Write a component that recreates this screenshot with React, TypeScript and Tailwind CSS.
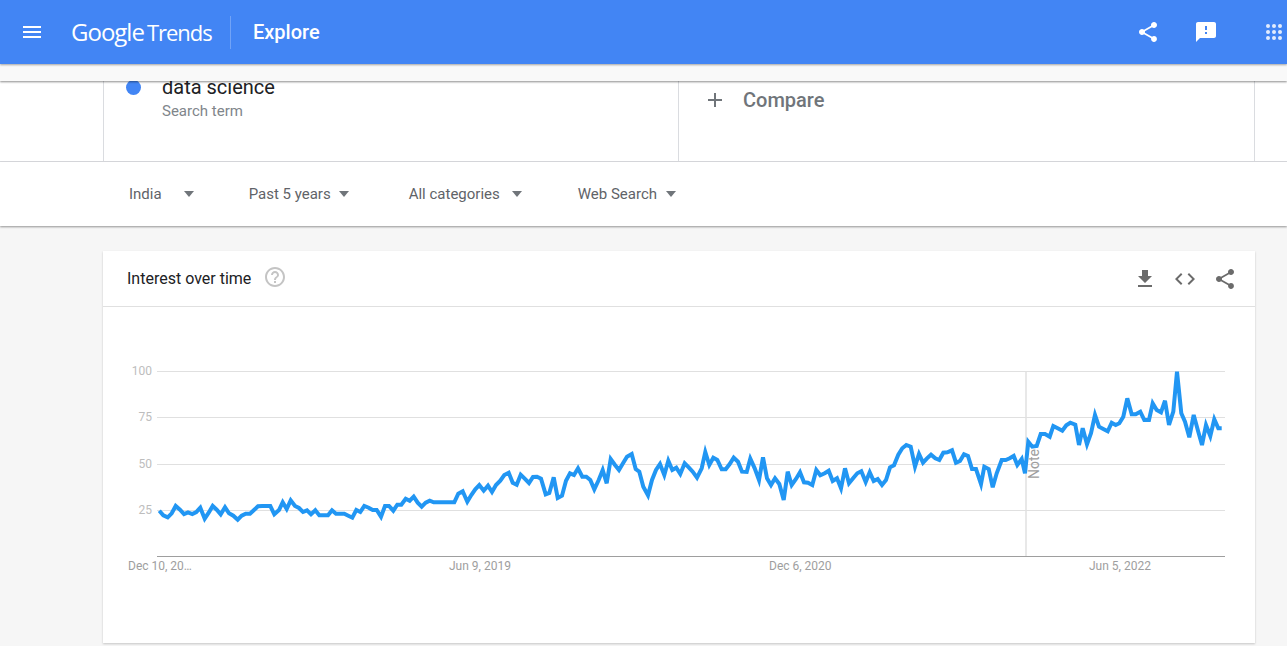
const filters = [
  { label: 'India', gap: 'gap-[22px]', next: 'mr-[55px]' },
  { label: 'Past 5 years', gap: 'gap-[8px]', next: 'mr-[60px]' },
  { label: 'All categories', gap: 'gap-[12px]', next: 'mr-[56px]' },
  { label: 'Web Search', gap: 'gap-[9px]', next: '' },
];

const SHARE = 'M18 16.08c-.76 0-1.44.3-1.96.77L8.91 12.7c.05-.23.09-.46.09-.7s-.04-.47-.09-.7l7.05-4.11c.54.5 1.25.81 2.04.81 1.66 0 3-1.34 3-3s-1.34-3-3-3-3 1.34-3 3c0 .24.04.47.09.7L8.04 9.81C7.5 9.31 6.79 9 6 9c-1.66 0-3 1.34-3 3s1.34 3 3 3c.79 0 1.5-.31 2.04-.81l7.12 4.16c-.05.21-.08.43-.08.65 0 1.61 1.31 2.92 2.92 2.92 1.61 0 2.92-1.31 2.92-2.92s-1.31-2.92-2.92-2.92z';

const Icon = ({ d, className }: { d: string; className: string }) => (
  <svg viewBox="0 0 24 24" fill="currentColor" className={className}>
    <path d={d} />
  </svg>
);

// traced from the chart, 3x scale, one run per x offset
const runs: [number, number[]][] = [
  [100, [178,452,190,466,203,472,215,460,227,438,240,449,252,462,264,457,277,462,289,456,301,443,314,476,326,458,338,438,350,449,362,463,375,442,387,460,400,467,413,479,425,467,437,461,450,461,462,450,474,439,487,438,499,438,511,438,523,463,537,450,548,427,560,447,572,421,585,438,597,444,609,456,621,451,633,463,646,451,658,466,670,466,684,466,696,451,708,461,720,461,733,461,745,467,757,473,769,450,781,456,793,438,806,443,818,450,830,450,843,470,855,438,867,438,880,452,892,434,904,434,917,416,929,422,941,410,953,428]],
  [420, [5,440,17,428,29,422,41,427,53,427,65,427,78,427,90,427,103,427,115,401,128,394,142,425,154,405,166,388,178,375,191,392,204,377,216,396,228,375,241,362,253,345,266,338,278,368,290,374,302,344,314,356,327,369,339,351,351,350,363,356,377,403,388,399,401,352,413,414,426,407,438,362,450,340,462,345,474,325,487,350,499,350,511,360,523,388,536,360,548,330,560,370,572,297,585,315,597,330,609,310,621,290,635,282,647,327,658,335,670,380,684,406,696,360,708,330,720,312,733,345,745,302,757,330,769,323,781,342,794,310,806,322,818,335,831,353,845,325,856,276,868,315,880,293,892,300,905,328,917,328,929,312,941,293,954,305]],
  [740, [6,335,20,336,31,296,44,325,57,360,69,292,81,355,93,375,105,355,118,372,131,420,143,335,155,375,168,357,180,337,192,367,204,368,217,375,229,330,241,346,254,340,266,332,278,363,291,355,303,385,315,325,327,370,340,354,352,340,364,334,377,366,389,337,401,363,413,357,426,375,438,360,450,322,462,316,475,284,487,265,499,255,512,260,525,320,537,282,549,308,561,295,573,284,586,295,598,300,610,278,622,277,636,271,648,308,660,303,672,283,684,288,696,327,708,327,723,372,733,320,746,327,758,382,770,340]],
  [1000, [5,300,17,300,29,295,41,288,52,315,65,297,75,340,85,245,97,260,110,258,122,222,135,222,149,230,160,198,173,205,187,212,199,196,211,188,226,194,237,255,248,205,261,253,273,220,285,165,297,200,310,207,323,214,335,188,347,195,358,190,370,170,382,115,395,163,407,163,421,155,433,180,447,180,458,130,470,150,483,157,495,122,507,195,520,155,531,35,544,160,555,185,568,232,581,165,594,212,606,255,618,195,631,228,643,178,655,205,665,205]],
];

const linePoints = runs
  .flatMap(([left, v]) =>
    v.flatMap((n, i) => (i % 2 === 0 ? [`${(left + n / 3).toFixed(1)},${(360 + v[i + 1] / 3).toFixed(1)}`] : []))
  )
  .join(' ');

const gridLines = [
  { y: 371, label: '100' },
  { y: 417, label: '75' },
  { y: 464, label: '50' },
  { y: 510, label: '25' },
];

const dates = [
  { x: 128, label: 'Dec 10, 20…' },
  { x: 449, label: 'Jun 9, 2019' },
  { x: 769, label: 'Dec 6, 2020' },
  { x: 1089, label: 'Jun 5, 2022' },
];

const App = () => {
  return (
    <div className="h-[646px] overflow-hidden bg-[#f6f6f6] font-['Roboto',sans-serif]">
      {/* Top bar */}
      <header className="relative z-20 flex h-[64px] items-center bg-[#4285f4] text-white shadow-[0_1px_2px_rgba(0,0,0,0.35)]">
        <Icon className="ml-[20px] h-6 w-6" d="M3 18h18v-2H3v2zm0-5h18v-2H3v2zm0-7v2h18V6H3z" />
        <div className="ml-[27px] flex w-[159px] items-baseline gap-[3px] font-['Open_Sans',sans-serif] text-[24px] leading-none tracking-[-1px]">
          <span>Google</span>
          <span className="text-[22px] tracking-[-1px]">Trends</span>
        </div>
        <div className="h-[33px] w-px bg-white/25" />
        <span className="ml-[22px] text-[20px] font-medium">Explore</span>
        <div className="ml-auto flex items-center">
          <Icon className="h-6 w-6" d={SHARE} />
          <Icon className="ml-[34px] h-6 w-6" d="M20 2H4c-1.1 0-1.99.9-1.99 2L2 22l4-4h14c1.1 0 2-.9 2-2V4c0-1.1-.9-2-2-2zm-7 12h-2v-2h2v2zm0-4h-2V6h2v4z" />
          <div className="mr-[5px] ml-[48px] grid grid-cols-3 gap-[2px] opacity-85">
            {Array.from({ length: 9 }).map((_, i) => (
              <span key={i} className="h-1 w-1 rounded-full bg-white" />
            ))}
          </div>
        </div>
      </header>

      {/* Collapsed strip under the bar */}
      <div className="relative z-10 h-[17px] bg-[#f9f9f9] shadow-[0_1px_2px_rgba(0,0,0,0.45)]" />

      {/* Search terms */}
      <section className="flex h-[81px] overflow-hidden border-b border-[#dadce0] bg-white pl-[103px]">
        <div className="flex h-full w-[575px] gap-[20px] border-l border-[#dadce0] pl-[22px]">
          <span className="mt-[-1px] h-[15px] w-[15px] rounded-full bg-[#4285f4]" />
          <div className="mt-[-7px] ml-[1px]">
            <div className="text-[20px] leading-[26px] text-[#202124]">data science</div>
            <div className="mt-[2px] text-[15px] leading-[18px] text-[#80868b]">Search term</div>
          </div>
        </div>
        <div className="flex h-full w-[576px] items-start border-l border-[#dadce0] pt-[7px] pl-[24px] text-[#70757a]">
          <svg viewBox="0 0 24 24" fill="currentColor" className="h-6 w-6"><path d="M19 13h-6v6h-2v-6H5v-2h6V5h2v6h6v2z" /></svg>
          <span className="ml-[16px] text-[20px] leading-6 font-medium">Compare</span>
        </div>
        <div className="h-full border-l border-[#dadce0]" />
      </section>

      {/* Filters */}
      <section className="flex h-[64px] items-center bg-white pl-[129px] text-[15px] text-[#5f6368] shadow-[0_1px_2px_rgba(0,0,0,0.4)]">
        {filters.map((f) => (
          <div key={f.label} className={`flex items-center ${f.gap} ${f.next}`}>
            <span>{f.label}</span>
            <span className="h-0 w-0 border-x-[5.5px] border-t-[6px] border-x-transparent border-t-[#70757a]" />
          </div>
        ))}
      </section>

      {/* Interest over time card */}
      <section className="mt-[25px] ml-[103px] h-[392px] w-[1152px] bg-white shadow-[0_1px_2px_rgba(0,0,0,0.2)]">
        <div className="flex h-[56px] items-center border-b border-[#e0e0e0] pr-[18px] pl-[24px]">
          <span className="text-[16px] text-[#202124]">Interest over time</span>
          <Icon className="ml-[12px] mb-[3px] h-6 w-6 text-[#c4c4c4]" d="M11 18h2v-2h-2v2zm1-16C6.48 2 2 6.48 2 12s4.48 10 10 10 10-4.48 10-10S17.52 2 12 2zm0 18c-4.41 0-8-3.59-8-8s3.59-8 8-8 8 3.59 8 8-3.59 8-8 8zm0-14c-2.21 0-4 1.79-4 4h2c0-1.1.9-2 2-2s2 .9 2 2c0 2-3 1.75-3 5h2c0-2.25 3-2.5 3-5 0-2.21-1.79-4-4-4z" />
          <div className="ml-auto flex items-center gap-4 text-[#6b6b6b]">
            <Icon className="h-6 w-6" d="M19 9h-4V3H9v6H5l7 7 7-7zM5 18v2h14v-2H5z" />
            <Icon className="h-6 w-6" d="M9.4 16.6L4.8 12l4.6-4.6L8 6l-6 6 6 6 1.4-1.4zm5.2 0l4.6-4.6-4.6-4.6L16 6l6 6-6 6-1.4-1.4z" />
            <Icon className="h-6 w-6" d={SHARE} />
          </div>
        </div>
        <svg viewBox="103 307 1152 336" className="block h-[336px] w-[1152px]" fontSize="12">
          {gridLines.map((g) => (
            <g key={g.y}>
              <line x1="157" x2="1225" y1={g.y + 0.5} y2={g.y + 0.5} stroke="#e0e0e0" />
              <text x="152" y={g.y + 4} textAnchor="end" fill="#bdbdbd">{g.label}</text>
            </g>
          ))}
          <line x1="157" x2="1225" y1="556.5" y2="556.5" stroke="#9e9e9e" />
          <line x1="1026" x2="1026" y1="371" y2="556" stroke="#e0e0e0" strokeWidth="1.5" />
          {dates.map((d) => (
            <text key={d.x} x={d.x} y="570" fill="#9e9e9e">{d.label}</text>
          ))}
          <text transform="translate(1039 479) rotate(-90)" fill="#9e9e9e" fontSize="14">Note</text>
          <polyline points={linePoints} fill="none" stroke="#2196f3" strokeWidth="4" strokeLinejoin="miter" />
        </svg>
      </section>
    </div>
  );
};

export default App;
